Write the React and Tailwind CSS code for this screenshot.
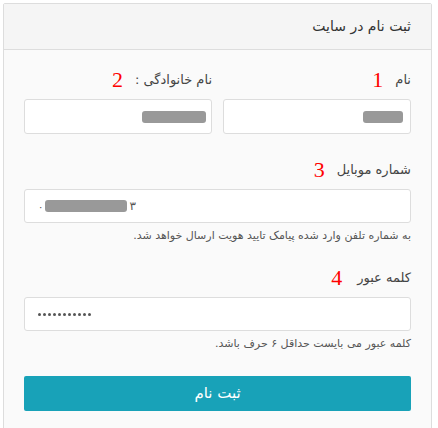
import React from "react";

const Num = ({ n }) => (
  <span className="text-[22px] leading-none text-[#ff0000] font-['Liberation_Serif',serif]">{n}</span>
);

const Blob = ({ w }) => <span className="inline-block h-[12px] rounded-[3px] bg-[#999]" style={{ width: w }} />;

const App = () => {
  return (
    <div className="w-[438px] h-[428px] overflow-hidden bg-white pt-[3px] pl-[3px] pr-[6px] font-['DejaVu_Sans',sans-serif]">
      <div dir="rtl" className="border border-[#dddddd] rounded-[2px]">
        <div className="h-[46px] bg-[#f5f5f5] border-b border-[#dddddd] px-[20px] flex items-center text-[14px] text-[#333]">
          ثبت نام در سایت
        </div>

        <div className="bg-[#fafafa] px-[20px] pt-[19px] pb-6">
          <div className="grid grid-cols-2 gap-[11px]">
            <div>
              <div className="h-[21px] mb-[9px] flex items-center gap-[12px] text-[13px] text-[#444]">
                <span>نام</span>
                <Num n="1" />
              </div>
              <div className="h-[35px] bg-white border border-[#dddddd] rounded-[3px] flex items-center pr-[7px]">
                <Blob w={40} />
              </div>
            </div>
            <div>
              <div className="h-[21px] mb-[9px] flex items-center gap-[12px] text-[13px] text-[#444]">
                <span>نام خانوادگی :</span>
                <Num n="2" />
              </div>
              <div className="h-[35px] bg-white border border-[#dddddd] rounded-[3px] flex items-center pr-[5px]">
                <Blob w={64} />
              </div>
            </div>
          </div>

          <div className="mt-[25px]">
            <div className="h-[21px] mb-[9px] flex items-center gap-[12px] text-[13px] text-[#444]">
              <span>شماره موبایل</span>
              <Num n="3" />
            </div>
            <div dir="ltr" className="h-[34px] bg-white border border-[#dddddd] rounded-[3px] flex items-center pl-[13px] text-[12px] text-[#555]">
              <span className="text-[10px] mr-[2px]">۰</span>
              <Blob w={82} />
              <span className="ml-[2px]">۳</span>
            </div>
            <div className="mt-[5px] text-[11px] leading-[16px] text-[#555]">
              به شماره تلفن وارد شده پیامک تایید هویت ارسال خواهد شد.
            </div>
          </div>

          <div className="mt-[23px]">
            <div className="h-[21px] mb-[9px] flex items-center gap-[15px] text-[13px] text-[#444]">
              <span>کلمه عبور</span>
              <Num n="4" />
            </div>
            <div dir="ltr" className="h-[34px] bg-white border border-[#dddddd] rounded-[3px] flex items-center pl-[13px] gap-[2px]">
              {Array.from({ length: 11 }).map((_, i) => (
                <span key={i} className="w-[3px] h-[3px] rounded-full bg-[#555]" />
              ))}
            </div>
            <div className="mt-[5px] text-[11px] leading-[16px] text-[#555]">
              کلمه عبور می بایست حداقل ۶ حرف باشد.
            </div>
          </div>

          <button className="mt-[24px] w-full h-[35px] rounded-[2px] bg-[#18a2b8] text-white text-[15px]">
            ثبت نام
          </button>
        </div>
      </div>
    </div>
  );
};

export default App;
